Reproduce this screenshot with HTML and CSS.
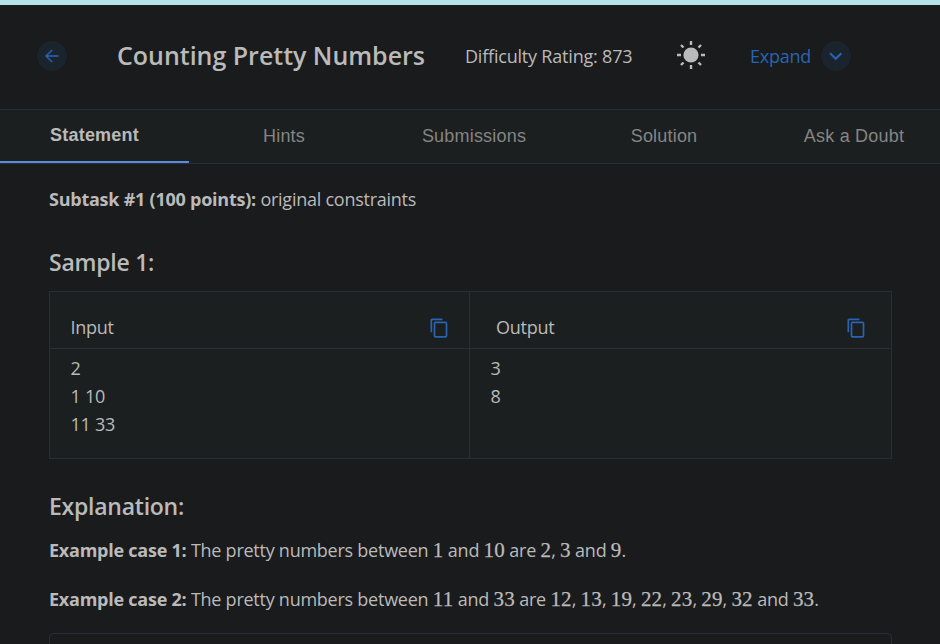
FILE: index.html
```html
<!DOCTYPE html>
<html lang="en">
<head>
<meta charset="utf-8">
<title>Counting Pretty Numbers</title>
<link rel="stylesheet" href="styles.css">
</head>
<body>
<header class="header">
  <button class="round" aria-label="Back"><svg width="14" height="14" viewBox="0 0 14 14"><path d="M13.5 7H1M7.2 1 1 7l6.2 6"/></svg></button>
  <h1 class="title">Counting Pretty Numbers</h1>
  <span class="rating">Difficulty Rating: 873</span>
  <svg class="sun" width="28" height="28" viewBox="0 0 28 28"><circle cx="14" cy="14" r="7.6"/><path d="M14 0v4M14 24v4M0 14h4M24 14h4M4 4l2.5 2.5M21.5 21.5 24 24M24 4l-2.5 2.5M6.5 21.5 4 24"/></svg>
  <span class="expand">Expand</span>
  <button class="round" aria-label="Expand panel"><svg width="14" height="14" viewBox="0 0 14 14"><path class="thick" d="m1.1 4.3 5.6 5.4 5.6-5.4"/></svg></button>
</header>
<nav class="tabs">
  <a class="tab active">Statement</a>
  <a class="tab">Hints</a>
  <a class="tab">Submissions</a>
  <a class="tab">Solution</a>
  <a class="tab">Ask a Doubt</a>
</nav>
<main class="content">
  <p class="subtask"><b>Subtask #1 (100 points):</b> original constraints</p>
  <h2 class="sample-title">Sample 1:</h2>
  <section class="sample">
    <div class="col">
      <div class="col-head"><span>Input</span><svg class="copy" width="18" height="20" viewBox="0 0 18 20"><path d="M12.5 1.3H2.2q-.9 0-.9.9v12"/><rect x="4.5" y="4.4" width="12" height="14.4" rx="1"/></svg></div>
      <pre class="values">2
1 10
11 33</pre>
    </div>
    <div class="col output">
      <div class="col-head"><span>Output</span><svg class="copy" width="18" height="20" viewBox="0 0 18 20"><path d="M12.5 1.3H2.2q-.9 0-.9.9v12"/><rect x="4.5" y="4.4" width="12" height="14.4" rx="1"/></svg></div>
      <pre class="values">3
8</pre>
    </div>
  </section>
  <h2 class="explain-title">Explanation:</h2>
  <p class="case"><b>Example case 1:</b> The pretty numbers between <i>1</i> and <i>10</i> are <i>2</i>, <i>3</i> and <i>9</i>.</p>
  <p class="case"><b>Example case 2:</b> The pretty numbers between <i>11</i> and <i>33</i> are <i>12</i>, <i>13</i>, <i>19</i>, <i>22</i>, <i>23</i>, <i>29</i>, <i>32</i> and <i>33</i>.</p>
  <div class="panel"></div>
</main>
</body>
</html>
```
FILE: styles.css
```css
* { box-sizing: border-box; }
body {
  margin: 0;
  height: 644px;
  overflow: hidden;
  background: #1a1b1d;
  color: #bababa;
  font: 18px/28px "Open Sans", sans-serif;
  letter-spacing: -0.25px;
}
b { letter-spacing: -0.24px; }
h1, h2, p, pre { margin: 0; }
.header {
  height: 109px;
  border-top: 5px solid #b8e4e9;
  display: flex;
  align-items: center;
  padding: 0 0 2px 37px;
}
.round {
  width: 30px;
  height: 30px;
  padding: 0;
  border: 0;
  border-radius: 50%;
  background: #1b242c;
  display: flex;
  align-items: center;
  justify-content: center;
}
.round path { fill: none; stroke: #2864b2; stroke-width: 1.4; }
.round .thick { stroke-width: 2.1; }
.title {
  width: 348px;
  margin: -2px 0 0 50px;
  font-size: 25px;
  font-weight: 600;
  letter-spacing: -0.02px;
  white-space: nowrap;
}
.rating { width: 212px; letter-spacing: -0.2px; white-space: nowrap; }
.sun { fill: #bababa; stroke: #bababa; stroke-width: 2.4; margin-top: -2px; }
.sun circle { stroke: none; }
.expand { width: 71px; margin-left: 45px; color: #2864b2; }
.tabs {
  height: 55px;
  display: flex;
  border-top: 1px solid #262e3e;
  border-bottom: 1px solid #262e3e;
  background: #1b1f20;
  font: 18px/52px "Liberation Sans", sans-serif;
  letter-spacing: 0.2px;
  color: #858585;
}
.tab { flex: 0 0 190px; text-align: center; }
.active {
  flex-basis: 189px;
  color: #bababa;
  font-weight: 700;
  line-height: 50px;
  border-bottom: 2px solid #5c8add;
}
.content { padding: 21px 48px 0 49px; }
.sample-title, .explain-title { font-size: 23px; font-weight: 600; line-height: 32px; }
.sample-title { margin-top: 33px; }
.sample {
  height: 168px;
  margin-top: 13px;
  display: grid;
  grid-template-columns: 419px 1fr;
  border: 1px solid #262e3e;
  background: #1b1f20;
}
.output { border-left: 1px solid #262e3e; }
.col-head {
  height: 57px;
  padding: 14px 21px 0 20.5px;
  display: flex;
  align-items: center;
  justify-content: space-between;
  border-bottom: 1px solid #262e3e;
}
.output .col-head { padding: 14px 26.5px 0 26px; }
.copy { fill: none; stroke: #2864b2; stroke-width: 1.7; margin-top: 2px; }
.values { padding: 5px 20.5px; font: inherit; }
.explain-title { margin-top: 31px; }
.case { margin-top: 14px; white-space: nowrap; }
.case + .case { margin-top: 21px; }
.case i {
  font: 21px/1 "Liberation Serif", serif;
  letter-spacing: 0.16px;
  -webkit-text-stroke: 0.25px currentColor;
}
.panel {
  height: 11px;
  margin-top: 20px;
  border: 1px solid #262e3e;
  border-bottom: 0;
  border-radius: 5px 5px 0 0;
}
```
